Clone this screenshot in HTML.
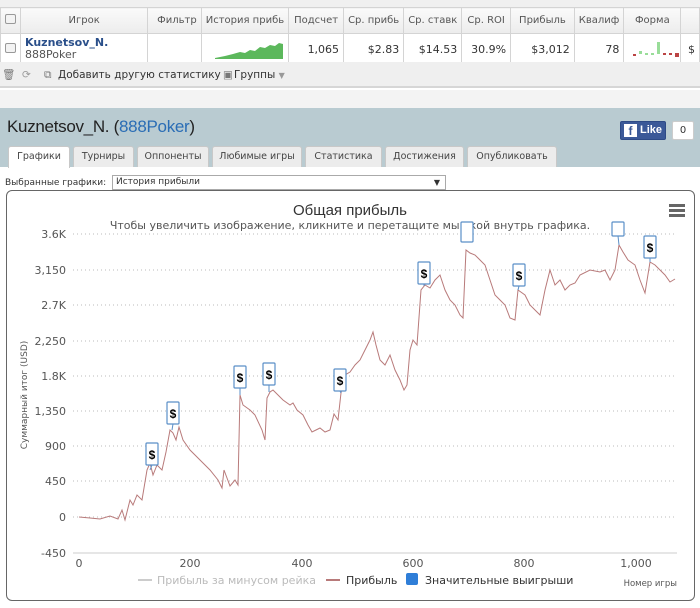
<!DOCTYPE html>
<html><head><meta charset="utf-8"><style>
*{box-sizing:border-box;margin:0;padding:0}
body{width:700px;height:608px;overflow:hidden;background:#fff;font-family:"DejaVu Sans","Liberation Sans",sans-serif;font-size:10px;color:#333;position:relative}
.abs{position:absolute}
table.g{position:absolute;left:0;top:7px;border-collapse:collapse;font-size:10px}
table.g td{border:1px solid #d4d4d4;height:27px;padding:0 4px;white-space:nowrap;overflow:hidden}
table.g tr.h td{background:linear-gradient(#fafafa,#ececec);color:#555;text-align:center;height:26px}
table.g tr.d td{text-align:right;font-size:11px;color:#333}
.cb{width:11px;height:10px;border:1px solid #999;border-radius:2px;background:#f3f3f3;display:inline-block}
.tab{position:absolute;top:146px;height:21px;background:#ececec;border:1px solid #c8c8c8;border-bottom:none;border-radius:3px 3px 0 0;font-size:9.5px;color:#444;text-align:center;line-height:20px}
</style></head><body>
<div class="abs" style="left:0;top:0;width:700px;height:7px;background:#f0f0f0"></div>
<table class="g">
<tr class="h"><td style="width:17px"><span class="cb"></span></td><td style="width:146px">Игрок</td><td style="width:56px;text-align:right">Фильтр</td><td style="width:83px">История прибь</td><td style="width:56px">Подсчет</td><td style="width:57px">Ср. прибь</td><td style="width:58px">Ср. ставк</td><td style="width:50px">Ср. ROI</td><td style="width:68px">Прибыль</td><td style="width:45px">Квалиф</td><td style="width:56px">Форма</td><td style="width:20px"></td></tr>
<tr class="d"><td><span class="cb"></span></td><td style="text-align:left;line-height:12px"><b style="color:#2a4f8a">Kuznetsov_N.</b><br><span style="color:#555">888Poker</span></td><td></td>
<td style="padding:0"><svg width="83" height="27"><path d="M10 24 L20 22 L28 20 L35 18 L40 19 L45 16 L50 17 L55 13 L60 14 L65 11 L70 12 L74 9 L78 10 L78 25 L10 25Z" fill="#5cb85c"/></svg></td>
<td>1,065</td><td>$2.83</td><td>$14.53</td><td>30.9%</td><td>$3,012</td><td>78</td>
<td style="padding:0"><svg width="56" height="27"><rect x="9" y="20" width="3" height="2" fill="#b44"/><rect x="15" y="17" width="3" height="3" fill="#9d9"/><rect x="21" y="19" width="3" height="2" fill="#9d9"/><rect x="27" y="19" width="3" height="2" fill="#9d9"/><rect x="33" y="8" width="3" height="12" fill="#9d9"/><rect x="39" y="19" width="3" height="2" fill="#b44"/><rect x="45" y="19" width="3" height="2" fill="#b44"/><rect x="51" y="19" width="4" height="4" fill="#b44"/></svg></td><td>$</td></tr>
</table>
<div class="abs" style="left:0;top:62px;width:700px;height:26px;background:#efefef;border-bottom:2px solid #d6d6d6;font-size:10.5px;color:#333;line-height:26px">
<span class="abs" style="left:2px;color:#777">🗑</span><span class="abs" style="left:22px;color:#999">⟳</span><span class="abs" style="left:44px;color:#777">⧉</span><span class="abs" style="left:58px">Добавить другую статистику</span><span class="abs" style="left:223px;color:#777">▣</span><span class="abs" style="left:234px">Группы <span style="color:#999;font-size:8px">▼</span></span></div>
<div class="abs" style="left:0;top:90px;width:700px;height:18px;background:#f3f3f3"></div>
<div class="abs" style="left:0;top:108px;width:700px;height:59px;background:#b9cbd1"></div>
<div class="abs" style="left:7px;top:117px;font-family:'Liberation Sans',sans-serif;font-size:17px;color:#222;letter-spacing:-0.3px">Kuznetsov_N. (<span style="color:#2a6db5">888Poker</span>)</div>
<div class="abs" style="left:620px;top:121px;width:46px;height:19px;background:#3b5998;border:1px solid #2d4a86;border-radius:2px;color:#fff;font-family:'Liberation Sans',sans-serif;font-weight:bold;font-size:11px;line-height:17px"><span style="display:inline-block;width:13px;height:13px;background:#fff;color:#3b5998;margin:2px 3px 0 3px;vertical-align:top;line-height:14px;text-align:center;font-size:12px">f</span>Like</div>
<div class="abs" style="left:672px;top:121px;width:22px;height:19px;background:#fff;border:1px solid #ccc;border-radius:2px;font-size:10px;line-height:17px;text-align:center">0</div>
<div class="tab" style="left:8px;width:62px;background:#fff;height:22px">Графики</div>
<div class="tab" style="left:73px;width:61px">Турниры</div>
<div class="tab" style="left:137px;width:72px">Оппоненты</div>
<div class="tab" style="left:212px;width:90px">Любимые игры</div>
<div class="tab" style="left:305px;width:77px">Статистика</div>
<div class="tab" style="left:385px;width:79px">Достижения</div>
<div class="tab" style="left:467px;width:90px">Опубликовать</div>
<div class="abs" style="left:5px;top:178px;font-size:9px">Выбранные графики:</div>
<div class="abs" style="left:112px;top:175px;width:334px;height:15px;border:1px solid #aaa;font-size:9px;line-height:13px;padding-left:3px">История прибыли<span class="abs" style="right:5px;top:0;font-size:8px">▼</span></div>
<div class="abs" style="left:6px;top:190px;width:689px;height:411px;border:1px solid #666;border-radius:6px"></div>
<svg class="abs" style="left:0;top:0" width="700" height="608" font-family="DejaVu Sans, Liberation Sans, sans-serif">
<text x="350" y="215" font-size="15" fill="#333" text-anchor="middle" font-family="Liberation Sans, sans-serif">Общая прибыль</text>
<text x="350" y="229" font-size="11" fill="#555" text-anchor="middle">Чтобы увеличить изображение, кликните и перетащите мышкой внутрь графика.</text>
<g fill="#666"><rect x="669" y="204" width="16" height="3"/><rect x="669" y="209" width="16" height="3"/><rect x="669" y="214" width="16" height="3"/></g>
<g stroke="#bbb" stroke-dasharray="1,3">
<line x1="73" x2="677" y1="234" y2="234"/><line x1="73" x2="677" y1="270" y2="270"/><line x1="73" x2="677" y1="305" y2="305"/><line x1="73" x2="677" y1="341" y2="341"/><line x1="73" x2="677" y1="376" y2="376"/><line x1="73" x2="677" y1="411" y2="411"/><line x1="73" x2="677" y1="446" y2="446"/><line x1="73" x2="677" y1="481" y2="481"/><line x1="73" x2="677" y1="517" y2="517"/></g>
<line x1="73" x2="677" y1="553" y2="553" stroke="#ccc"/>
<g font-size="11" fill="#555" text-anchor="end">
<text x="66" y="238">3.6K</text><text x="66" y="274">3,150</text><text x="66" y="309">2.7K</text><text x="66" y="345">2,250</text><text x="66" y="380">1.8K</text><text x="66" y="415">1,350</text><text x="66" y="450">900</text><text x="66" y="485">450</text><text x="66" y="521">0</text><text x="66" y="557">-450</text></g>
<g font-size="11" fill="#555" text-anchor="middle">
<text x="79" y="567">0</text><text x="190" y="567">200</text><text x="302" y="567">400</text><text x="413" y="567">600</text><text x="524" y="567">800</text><text x="636" y="567">1,000</text></g>
<text transform="translate(27,395) rotate(-90)" font-size="9" fill="#555" text-anchor="middle">Суммарный итог (USD)</text>
<polyline fill="none" stroke="#b87a7a" stroke-width="1" points="79,517 90,518 100,519 110,516 118,519 122,510 125,520 130,500 133,505 137,495 142,500 147,470 150,463 153,475 157,465 162,470 166,452 170,430 173,433 176,440 179,427 183,440 190,450 200,460 210,470 218,480 222,488 224,470 227,478 230,486 235,480 238,485 240,395 243,405 250,410 255,415 262,430 265,440 267,398 270,392 273,390 278,395 283,400 290,405 293,403 297,410 303,415 308,425 312,432 316,430 320,428 325,432 330,430 334,414 338,420 341,393 345,375 350,372 355,365 360,360 365,350 370,340 373,332 376,345 380,360 385,365 390,355 395,370 400,380 404,390 407,385 410,350 413,340 417,345 421,290 425,285 430,288 435,280 440,275 445,290 450,300 455,305 460,315 463,318 466,250 470,253 475,255 478,258 485,265 490,280 495,295 500,300 505,305 510,318 515,320 518,290 525,295 530,305 535,310 540,315 545,290 550,270 555,285 560,280 565,290 570,285 575,283 580,275 590,270 600,272 605,270 610,280 615,270 619,245 623,252 628,260 635,265 640,280 645,293 650,262 655,265 660,270 665,275 670,282 675,279"/>
<g font-size="12" font-weight="bold" fill="#000" text-anchor="middle" font-family="Liberation Sans, sans-serif">
<g stroke="#5b8fc7" fill="#fff" stroke-width="1.2">
<rect x="146" y="443" width="12" height="22" rx="1"/><rect x="167" y="402" width="12" height="22" rx="1"/><rect x="234" y="366" width="12" height="22" rx="1"/><rect x="263" y="363" width="12" height="22" rx="1"/><rect x="334" y="369" width="12" height="22" rx="1"/><rect x="418" y="262" width="12" height="22" rx="1"/><rect x="461" y="222" width="12" height="20" rx="1"/><rect x="513" y="264" width="12" height="22" rx="1"/><rect x="612" y="222" width="12" height="14" rx="1"/><rect x="644" y="236" width="12" height="22" rx="1"/></g>
<g stroke="#5b8fc7"><line x1="152" y1="465" x2="150" y2="470"/><line x1="173" y1="424" x2="172" y2="430"/><line x1="240" y1="388" x2="240" y2="395"/><line x1="269" y1="385" x2="269" y2="392"/><line x1="340" y1="391" x2="341" y2="393"/><line x1="424" y1="284" x2="424" y2="286"/><line x1="519" y1="286" x2="518" y2="290"/><line x1="650" y1="258" x2="650" y2="262"/><line x1="618" y1="236" x2="619" y2="245"/></g>
<text x="152" y="459">$</text><text x="173" y="418">$</text><text x="240" y="382">$</text><text x="269" y="379">$</text><text x="340" y="385">$</text><text x="424" y="278">$</text><text x="519" y="280">$</text><text x="650" y="252">$</text></g>
<rect x="0" y="191" width="700" height="31" fill="none"/>
<line x1="138" y1="580" x2="152" y2="580" stroke="#ccc" stroke-width="2"/>
<text x="157" y="584" font-size="11" fill="#bbb">Прибыль за минусом рейка</text>
<line x1="326" y1="580" x2="340" y2="580" stroke="#b87a7a" stroke-width="2"/>
<text x="346" y="584" font-size="11" fill="#333">Прибыль</text>
<rect x="406" y="573" width="12" height="12" rx="2" fill="#2f7ed8"/>
<text x="425" y="584" font-size="11" fill="#333">Значительные выигрыши</text>
<text x="677" y="586" font-size="8.5" fill="#555" text-anchor="end">Номер игры</text>
</svg>
</body></html>
